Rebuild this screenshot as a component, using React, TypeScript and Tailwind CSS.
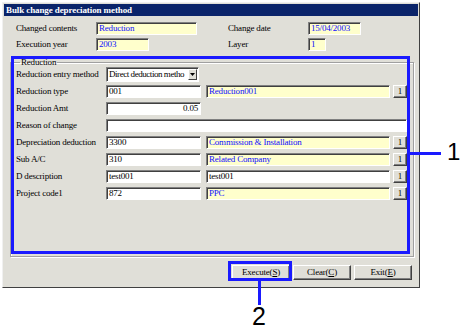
const serif = "font-['Liberation_Serif',serif] text-[9px] tracking-[-0.2px] leading-none";

function Field({
  w,
  value = "",
  yellow = false,
  right = false,
}: {
  w: string;
  value?: string;
  yellow?: boolean;
  right?: boolean;
}) {
  return (
    <div
      className={`${w} h-[13px] flex items-center px-[2px] border border-t-[#808080] border-l-[#808080] border-r-white border-b-white shadow-[inset_1px_1px_0_#404040] overflow-hidden whitespace-nowrap ${
        yellow ? "bg-[#ffffcc] text-[#1010ff]" : "bg-white text-black"
      } ${right ? "justify-end" : ""}`}
    >
      {value}
    </div>
  );
}

function LookupBtn() {
  return (
    <div className="w-[14px] h-[13px] flex items-center justify-center bg-[#e0dfd8] border border-t-white border-l-white border-r-[#404040] border-b-[#404040] shadow-[inset_-1px_-1px_0_#808080] text-black">
      1
    </div>
  );
}

function Row({
  label,
  code,
  name,
  yellow = true,
}: {
  label: string;
  code: string;
  name: string;
  yellow?: boolean;
}) {
  return (
    <div className="flex items-center">
      <div className="w-[90px]">{label}</div>
      <Field w="w-[95px]" value={code} />
      <div className="w-[5px]" />
      <Field w="w-[184px]" value={name} yellow={yellow} />
      <div className="w-[3px]" />
      <LookupBtn />
    </div>
  );
}

function Btn({ text, k }: { text: string; k: string }) {
  return (
    <div className="w-[58px] h-[15px] flex items-center justify-center bg-[#e0dfd8] border border-t-white border-l-white border-r-[#404040] border-b-[#404040] shadow-[inset_-1px_-1px_0_#808080] text-black">
      {text}(<span className="underline">{k}</span>)
    </div>
  );
}

export default function App() {
  return (
    <div className="relative w-[471px] h-[334px] bg-white overflow-hidden">
      {/* dialog window */}
      <div
        className={`ml-[2px] mt-[2px] w-[418px] h-[286px] flex flex-col p-[1px] bg-[#e0dfd8] border border-t-[#f0f0f0] border-l-[#f0f0f0] border-r-[#404040] border-b-[#404040] ${serif} text-black`}
      >
        <div className="h-[12px] bg-[#0a246a] text-white font-bold text-[9px] tracking-[-0.1px] flex items-center px-[2px]">
          Bulk change depreciation method
        </div>

        <div className="px-[6px] flex flex-col">
          <div className="mt-[6px] pl-[6px] grid grid-cols-[80px_132px_80px_auto] gap-y-[3px] items-center">
            <div>Changed contents</div>
            <Field w="w-[101px]" value="Reduction" yellow />
            <div>Change date</div>
            <Field w="w-[53px]" value="15/04/2003" yellow />
            <div>Execution year</div>
            <Field w="w-[53px]" value="2003" yellow />
            <div>Layer</div>
            <Field w="w-[18px]" value="1" yellow />
          </div>

          <fieldset className="mt-[6px] w-[404px] border border-[#a0a0a0] shadow-[1px_1px_0_white,inset_1px_1px_0_white] pl-[5px] pb-[56px]">
            <legend className="px-[1px] ml-[4px] h-[10px] leading-[10px]">Reduction</legend>
            <div className="flex flex-col gap-[4px]">
              <div className="flex items-center mb-[-1px]">
                <div className="w-[90px]">Reduction entry method</div>
                <div className="w-[93px] h-[15px] flex items-center bg-white border border-t-[#808080] border-l-[#808080] border-r-white border-b-white shadow-[inset_1px_1px_0_#404040] pl-[2px] overflow-hidden">
                  <span className="flex-1 whitespace-nowrap tracking-[-0.45px]">Direct deduction metho</span>
                  <span className="w-[9px] h-[11px] mr-[1px] flex items-center justify-center bg-[#e0dfd8] border border-t-white border-l-white border-r-[#404040] border-b-[#404040]">
                    <svg width="5" height="3" viewBox="0 0 5 3">
                      <path d="M0 0h5L2.5 3z" fill="black" />
                    </svg>
                  </span>
                </div>
              </div>
              <Row label="Reduction type" code="001" name="Reduction001" />
              <div className="flex items-center">
                <div className="w-[90px]">Reduction Amt</div>
                <Field w="w-[95px]" value="0.05" right />
              </div>
              <div className="flex items-center">
                <div className="w-[90px]">Reason of change</div>
                <Field w="w-[301px]" />
              </div>
              <Row label="Depreciation deduction" code="3300" name="Commission & Installation" />
              <Row label="Sub A/C" code="310" name="Related Company" />
              <Row label="D description" code="test001" name="test001" yellow={false} />
              <Row label="Project code1" code="872" name="PPC" />
            </div>
          </fieldset>

          <div className="mt-[8px] flex justify-end gap-[3px]">
            <Btn text="Execute" k="S" />
            <Btn text="Clear" k="C" />
            <Btn text="Exit" k="E" />
          </div>
        </div>
      </div>

      {/* callout overlays */}
      <div className="absolute left-[11px] top-[56px] w-[399px] h-[198px] border-[3px] border-[#1a1aff]" />
      <div className="absolute left-[410px] top-[152px] w-[31px] h-[3px] bg-[#1a1aff]" />
      <div className="absolute left-[447px] top-[140px] font-['Liberation_Sans',sans-serif] text-[24px] leading-none text-black">
        1
      </div>
      <div className="absolute left-[228px] top-[261px] w-[64px] h-[20px] border-[3px] border-[#1a1aff]" />
      <div className="absolute left-[258px] top-[281px] w-[3px] h-[24px] bg-[#1a1aff]" />
      <div className="absolute left-[252px] top-[304px] font-['Liberation_Sans',sans-serif] text-[25px] leading-none text-black">
        2
      </div>
    </div>
  );
}
